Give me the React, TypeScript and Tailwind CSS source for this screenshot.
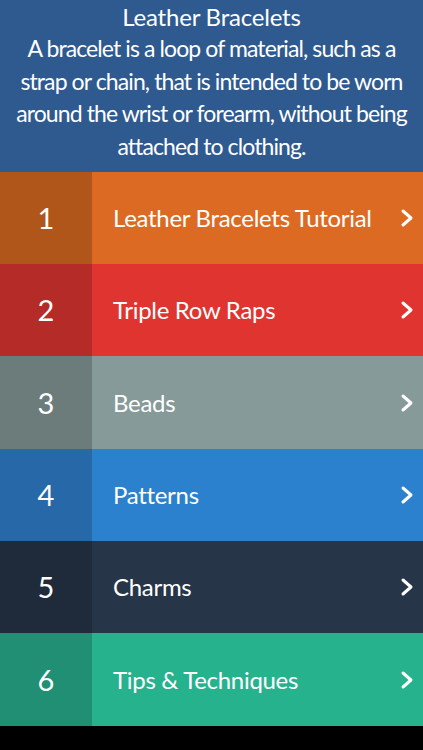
const items = [
  { n: 1, title: "Leather Bracelets Tutorial", main: "bg-[#dd6a22]", side: "bg-[#b0561b]", h: "h-[92px]" },
  { n: 2, title: "Triple Row Raps", main: "bg-[#df3430]", side: "bg-[#b42b28]", h: "h-[92px]" },
  { n: 3, title: "Beads", main: "bg-[#869a99]", side: "bg-[#6c7c7b]", h: "h-[93px]" },
  { n: 4, title: "Patterns", main: "bg-[#2c81cf]", side: "bg-[#2668a8]", h: "h-[92px]" },
  { n: 5, title: "Charms", main: "bg-[#263548]", side: "bg-[#1f2b3a]", h: "h-[92px]" },
  { n: 6, title: "Tips & Techniques", main: "bg-[#27b28e]", side: "bg-[#208f73]", h: "h-[93px]" },
];

function Chevron() {
  return (
    <svg width="14" height="20" viewBox="0 0 14 20" fill="none" stroke="white" strokeWidth="3" strokeLinecap="round" strokeLinejoin="round">
      <polyline points="3,3 11,10 3,17" />
    </svg>
  );
}

export default function App() {
  return (
    <div className="flex h-[750px] w-[423px] flex-col bg-black font-['Lato',sans-serif] text-white">
      <header className="flex h-[172px] flex-col items-center bg-[#2f5a90] px-2 pt-[2px] text-center">
        <h1 className="text-[24px] leading-[30px] tracking-[-0.2px]">Leather Bracelets</h1>
        <p className="text-[23px] leading-[32.5px] tracking-[-0.9px] whitespace-nowrap">
          A bracelet is a loop of material, such as a
          <br />
          strap or chain, that is intended to be worn
          <br />
          around the wrist or forearm, without being
          <br />
          attached to clothing.
        </p>
      </header>
      {items.map((item) => (
        <div key={item.n} className={`flex ${item.h} ${item.main}`}>
          <div className={`flex w-[92px] items-center justify-center text-[29px] ${item.side}`}>
            {item.n}
          </div>
          <div className="flex flex-1 items-center pl-[21px] text-[24px] tracking-[-0.3px]">{item.title}</div>
          <div className="flex items-center pr-[9px]">
            <Chevron />
          </div>
        </div>
      ))}
    </div>
  );
}
